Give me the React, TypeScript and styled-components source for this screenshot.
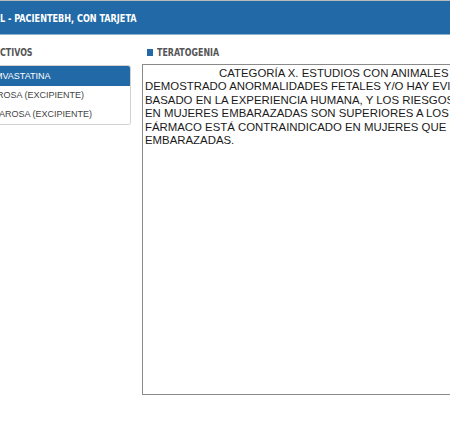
import React from 'react';
import styled, { createGlobalStyle } from 'styled-components';

const GlobalStyle = createGlobalStyle`
  html, body {
    margin: 0;
    padding: 0;
    background: #fff;
    overflow: hidden;
  }
  body {
    font-family: "Liberation Sans", Arial, sans-serif;
  }
`;

const Page = styled.div`
  width: 450px;
  height: 422px;
  overflow: hidden;
  background: #fff;
`;

const TopBar = styled.header`
  height: 33px;
  display: flex;
  align-items: center;
  background: #226aa7;
  border-top: 1px solid #b9b9b9;
  border-bottom: 1px solid #8eafcd;
`;

const Title = styled.h1`
  margin: 0;
  color: #fff;
  font-family: "Liberation Sans Narrow", "DejaVu Sans Condensed", "Roboto", sans-serif;
  font-size: 10.5px;
  font-weight: 700;
  white-space: nowrap;
  transform: scaleX(0.86);
  transform-origin: left center;
`;

const Columns = styled.main`
  display: grid;
  grid-template-columns: 131px 340px;
  column-gap: 11px;
  padding-top: 11px;
`;

const Panel = styled.section<{ $gap: number }>`
  display: flex;
  flex-direction: column;
  gap: ${(p) => p.$gap}px;
`;

const Label = styled.h2`
  margin: 0;
  height: 12px;
  display: flex;
  align-items: center;
  gap: 4px;
  white-space: nowrap;
`;

const LabelText = styled.span`
  color: #555;
  font-family: "Liberation Sans Narrow", "DejaVu Sans Condensed", "Roboto", sans-serif;
  font-size: 10px;
  font-weight: 700;
  transform: scaleX(0.88);
  transform-origin: left center;
`;

const Marker = styled.span`
  width: 6px;
  height: 7px;
  margin-left: 5px;
  background: #226aa7;
`;

const List = styled.ul`
  margin: 0;
  padding: 0;
  list-style: none;
  border: 1px solid #d2d2d2;
  border-left: none;
  border-radius: 0 3px 3px 0;
  overflow: hidden;
`;

const Item = styled.li<{ $active?: boolean; $offset: number }>`
  height: ${(p) => (p.$active ? 20 : 19)}px;
  line-height: ${(p) => (p.$active ? 20 : 19)}px;
  text-indent: ${(p) => p.$offset}px;
  font-size: 9px;
  white-space: nowrap;
  overflow: hidden;
  color: ${(p) => (p.$active ? '#fff' : '#444')};
  background: ${(p) => (p.$active ? '#226aa7' : '#fff')};
`;

const NoteBox = styled.div`
  height: 325px;
  border: 1px solid #8a8a8a;
  padding: 2px 2px;
  font-size: 11.4px;
  line-height: 13.4px;
  color: #1a1a1a;
  white-space: pre;
`;

const Line = styled.div<{ $indent?: number }>`
  padding-left: ${(p) => p.$indent ?? 0}px;
`;

const items = [
  { key: 'a', label: 'MVASTATINA', active: true, offset: -5 },
  { key: 'b', label: 'ROSA (EXCIPIENTE)', offset: -3 },
  { key: 'c', label: 'AROSA (EXCIPIENTE)', offset: -1 },
];

const noteLines = [
  'CATEGORÍA X. ESTUDIOS CON ANIMALES O HUMANOS HAN',
  'DEMOSTRADO ANORMALIDADES FETALES Y/O HAY EVIDENCIA DE RIESGO FETAL',
  'BASADO EN LA EXPERIENCIA HUMANA, Y LOS RIESGOS DEL USO DEL FÁRMACO',
  'EN MUJERES EMBARAZADAS SON SUPERIORES A LOS POSIBLES BENEFICIOS. EL',
  'FÁRMACO ESTÁ CONTRAINDICADO EN MUJERES QUE ESTÁN O PUEDEN ESTAR',
  'EMBARAZADAS.',
];

const App: React.FC = () => (
  <Page>
    <GlobalStyle />
    <TopBar>
      <Title>L - PACIENTEBH, CON TARJETA</Title>
    </TopBar>
    <Columns>
      <Panel $gap={7}>
        <Label>
          <LabelText>CTIVOS</LabelText>
        </Label>
        <List>
          {items.map((item) => (
            <Item key={item.key} $active={item.active} $offset={item.offset}>
              {item.label}
            </Item>
          ))}
        </List>
      </Panel>
      <Panel $gap={6}>
        <Label>
          <Marker />
          <LabelText>TERATOGENIA</LabelText>
        </Label>
        <NoteBox>
          {noteLines.map((line, i) => (
            <Line key={i} $indent={i === 0 ? 74 : 0}>
              {line}
            </Line>
          ))}
        </NoteBox>
      </Panel>
    </Columns>
  </Page>
);

export default App;
